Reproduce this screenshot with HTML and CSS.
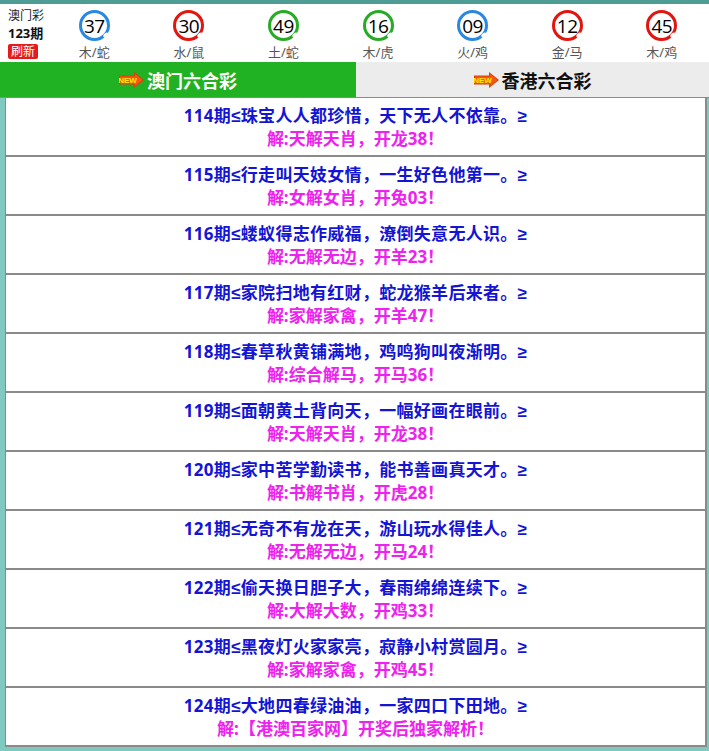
FILE: index.html
```html
<!DOCTYPE html>
<html lang="zh-CN">
<head>
<meta charset="utf-8">
<title>澳门六合彩</title>
<link rel="stylesheet" href="styles.css">
</head>
<body>
<div class="topbar"></div>
<div class="draw">
  <div class="draw-info">
    <div class="draw-name">澳门彩</div>
    <div class="draw-no">123期</div>
    <span class="refresh">刷新</span>
  </div>
  <div class="ball-cell"><span class="ball blue">37</span><span class="zodiac">木/蛇</span></div>
  <div class="ball-cell"><span class="ball red">30</span><span class="zodiac">水/鼠</span></div>
  <div class="ball-cell"><span class="ball green">49</span><span class="zodiac">土/蛇</span></div>
  <div class="ball-cell"><span class="ball green">16</span><span class="zodiac">木/虎</span></div>
  <div class="ball-cell"><span class="ball blue">09</span><span class="zodiac">火/鸡</span></div>
  <div class="ball-cell"><span class="ball red">12</span><span class="zodiac">金/马</span></div>
  <div class="ball-cell"><span class="ball red">45</span><span class="zodiac">木/鸡</span></div>
</div>
<div class="tabs">
  <div class="tab active">
    <svg class="new-icon" width="25" height="16" viewBox="0 0 25 16"><polygon points="0,3.5 15,3.5 15,0 25,8 15,16 15,12.5 0,12.5" fill="#e23c0a"/><polygon points="1,4.5 16,4.5 16,2 23.5,8 16,14 16,11.5 1,11.5" fill="#f25a14"/><text x="8.5" y="11" font-family="Liberation Sans, sans-serif" font-size="8" font-weight="bold" fill="#ffe600" text-anchor="middle">NEW</text></svg>
    <span>澳门六合彩</span>
  </div>
  <div class="tab">
    <svg class="new-icon" width="25" height="16" viewBox="0 0 25 16"><polygon points="0,3.5 15,3.5 15,0 25,8 15,16 15,12.5 0,12.5" fill="#e23c0a"/><polygon points="1,4.5 16,4.5 16,2 23.5,8 16,14 16,11.5 1,11.5" fill="#f25a14"/><text x="8.5" y="11" font-family="Liberation Sans, sans-serif" font-size="8" font-weight="bold" fill="#ffe600" text-anchor="middle">NEW</text></svg>
    <span>香港六合彩</span>
  </div>
</div>
<div class="list">
  <div class="row"><div class="poem">114期≤珠宝人人都珍惜，天下无人不依靠。≥</div><div class="answer">解:天解天肖，开龙38！</div></div>
  <div class="row"><div class="poem">115期≤行走叫天妓女情，一生好色他第一。≥</div><div class="answer">解:女解女肖，开兔03！</div></div>
  <div class="row"><div class="poem">116期≤蝼蚁得志作威福，潦倒失意无人识。≥</div><div class="answer">解:无解无边，开羊23！</div></div>
  <div class="row"><div class="poem">117期≤家院扫地有红财，蛇龙猴羊后来者。≥</div><div class="answer">解:家解家禽，开羊47！</div></div>
  <div class="row"><div class="poem">118期≤春草秋黄铺满地，鸡鸣狗叫夜渐明。≥</div><div class="answer">解:综合解马，开马36！</div></div>
  <div class="row"><div class="poem">119期≤面朝黄土背向天，一幅好画在眼前。≥</div><div class="answer">解:天解天肖，开龙38！</div></div>
  <div class="row"><div class="poem">120期≤家中苦学勤读书，能书善画真天才。≥</div><div class="answer">解:书解书肖，开虎28！</div></div>
  <div class="row"><div class="poem">121期≤无奇不有龙在天，游山玩水得佳人。≥</div><div class="answer">解:无解无边，开马24！</div></div>
  <div class="row"><div class="poem">122期≤偷天换日胆子大，春雨绵绵连续下。≥</div><div class="answer">解:大解大数，开鸡33！</div></div>
  <div class="row"><div class="poem">123期≤黑夜灯火家家亮，寂静小村赏圆月。≥</div><div class="answer">解:家解家禽，开鸡45！</div></div>
  <div class="row"><div class="poem">124期≤大地四春绿油油，一家四口下田地。≥</div><div class="answer">解:【港澳百家网】开奖后独家解析！</div></div>
</div>
</body>
</html>
```

FILE: styles.css
```css
html, body {
  margin: 0;
  padding: 0;
}
body {
  background: #80c9c1;
  font-family: "Noto Sans", "Liberation Sans", "Noto Sans CJK SC", sans-serif;
  width: 709px;
  height: 751px;
  overflow: hidden;
}
.topbar {
  height: 4px;
  background: #4d9d94;
}
.draw {
  display: flex;
  background: #fff;
  height: 58px;
}
.draw-info {
  width: 47px;
  display: flex;
  flex-direction: column;
  align-items: flex-start;
  padding-left: 8px;
  box-sizing: border-box;
}
.draw-name {
  font-size: 12px;
  line-height: 13px;
  margin-top: 5px;
  color: #222;
}
.draw-no {
  font-size: 13px;
  font-weight: bold;
  line-height: 15px;
  margin-top: 4px;
  color: #111;
}
.refresh {
  margin-top: 3px;
  background: #e41b1b;
  color: #fff;
  font-size: 12px;
  line-height: 15px;
  padding: 0 3px;
  border-radius: 2px;
}
.ball-cell {
  flex: 1;
  display: flex;
  flex-direction: column;
  align-items: center;
}
.ball {
  position: relative;
  margin-top: 6px;
  width: 31px;
  height: 31px;
  box-sizing: border-box;
  border-radius: 50%;
  border: 3.5px solid #2a88e0;
  background: #fff;
  display: flex;
  align-items: center;
  justify-content: center;
  font-family: "Open Sans", "Noto Sans", sans-serif;
  font-size: 19px;
  color: #000;
  letter-spacing: -0.5px;
}
.ball::after {
  content: "";
  position: absolute;
  right: -2px;
  bottom: 1px;
  width: 6px;
  height: 4px;
  border-radius: 50%;
  background: #fff;
  transform: rotate(-40deg);
}
.ball.red { border-color: #e2150f; }
.ball.green { border-color: #27ab27; }
.ball.blue { border-color: #2a88e0; }
.zodiac {
  font-size: 13px;
  line-height: 17px;
  color: #555;
  margin-top: 3px;
}
.tabs {
  display: flex;
  height: 35px;
  background: #ececec;
  border-bottom: 1px solid #8a8a8a;
}
.tab {
  flex: 1;
  display: flex;
  align-items: center;
  justify-content: center;
  gap: 3px;
  font-size: 18px;
  font-weight: bold;
  color: #111;
}
.tab.active {
  background: #21b224;
  color: #fff;
  flex: 0 0 356px;
}
.new-icon {
  display: block;
  margin-top: 1px;
}
.list {
  margin: 0 2px 0 5px;
  background: #fff;
  border-left: 1px solid #8a8a8a;
  border-right: 2px solid #8a8a8a;
}
.row {
  border-bottom: 2px solid #8a8a8a;
  padding: 6px 0 5px;
  text-align: center;
  font-size: 17px;
  font-weight: bold;
  line-height: 23px;
}
.poem {
  color: #1414d4;
  letter-spacing: 0.3px;
}
.answer {
  color: #ee22ee;
}
```
